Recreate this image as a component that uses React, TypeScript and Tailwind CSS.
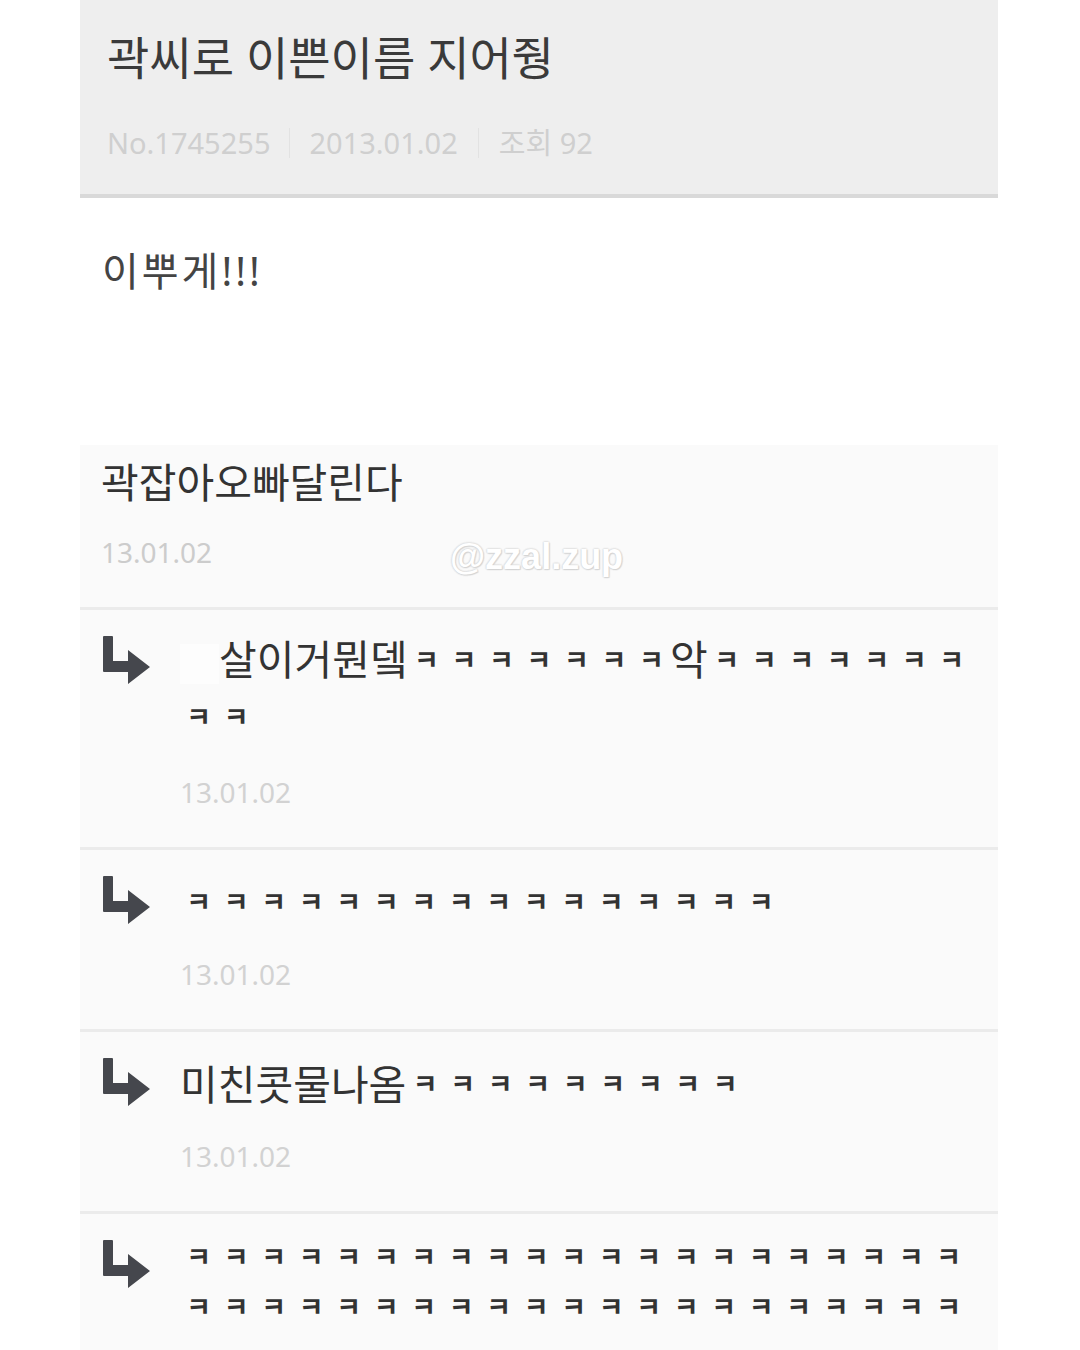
import React from "react";

const FONT = "font-['Noto_Sans','Noto_Sans_CJK_KR',sans-serif]";

function Arrow() {
  return (
    <svg width="50" height="50" viewBox="0 0 50 50" className="block">
      <path
        d="M3 1 Q3 0 4 0 H12 Q13 0 13 1 V25 H28 V14 L50 31 L28 48 V36 H4 Q3 36 3 35 Z"
        fill="#45474d"
      />
    </svg>
  );
}

function K() {
  return (
    <span className="inline-block w-[37.5px] text-center align-top text-[27px] font-bold leading-[inherit] text-[#333333]">
      ㅋ
    </span>
  );
}

function Ks({ n }: { n: number }) {
  return (
    <>
      {Array.from({ length: n }).map((_, i) => (
        <K key={i} />
      ))}
    </>
  );
}

function Reply({
  children,
  pt,
  leading,
  date = true,
}: {
  children: React.ReactNode;
  pt: string;
  leading: string;
  date?: boolean;
}) {
  return (
    <div className="flex items-start border-b-[3px] border-[#ebebeb] pl-[20px] pr-[18px]">
      <div className="mt-[26px] w-[50px] shrink-0">
        <Arrow />
      </div>
      <div className={`ml-[30px] flex-1 ${pt} ${date ? "pb-[40px]" : "pb-[20px]"}`}>
        <div className={`text-[41px] ${leading} text-[#333333]`}>{children}</div>
        {date && (
          <div className="mt-[32px] text-[28px] leading-[30px] text-[#d2d2d2]">13.01.02</div>
        )}
      </div>
    </div>
  );
}

export default function App() {
  return (
    <div className={`min-h-[1350px] w-[1080px] overflow-hidden bg-white ${FONT}`}>
      <div className="ml-[80px] w-[918px]">
        {/* header */}
        <div className="h-[198px] border-b-4 border-[#d9d9d9] bg-[#eeeeee] px-[27px] pt-[29px]">
          <div className="text-[46px] leading-[56px] text-[#3a3a3a]">곽씨로 이쁜이름 지어줭</div>
          <div className="mt-[41px] flex items-center text-[29px] leading-[34px] text-[#cfcfcf]">
            <span>No.1745255</span>
            <span className="mx-[19px] h-[30px] w-px bg-[#e2e2e2]" />
            <span>2013.01.02</span>
            <span className="mx-[20px] h-[30px] w-px bg-[#e2e2e2]" />
            <span>조회 92</span>
          </div>
        </div>

        {/* post body */}
        <div className="h-[247px] bg-white pl-[22px] pt-[48px]">
          <div className="text-[40px] leading-[50px] tracking-[3px] text-[#444444]">이뿌게!!!</div>
        </div>

        {/* comments */}
        <div className="bg-[#fafafa]">
          <div className="relative border-b-[3px] border-[#ebebeb] pl-[21px] pt-[12px] pb-[40px]">
            <div className="text-[41px] leading-[50px] text-[#333333]">곽잡아오빠달린다</div>
            <div className="mt-[30px] text-[28px] leading-[30px] text-[#cccccc]">13.01.02</div>
            <div className="absolute left-[370px] top-[90px] font-['Liberation_Sans',sans-serif] text-[36px] font-bold leading-[44px] text-white [text-shadow:0_0_2px_#cfcfcf,0_0_2px_#cfcfcf,1px_1px_1px_#d8d8d8]">
              @zzal.zup
            </div>
          </div>

          <Reply pt="pt-[21px]" leading="leading-[57px]">
            <span className="inline-block h-[40px] w-[39px] align-middle bg-[#fdfdfd]" />
            살이거뭔뎈
            <Ks n={7} />
            악
            <Ks n={7} />
            <Ks n={2} />
          </Reply>

          <Reply pt="pt-[27px]" leading="leading-[50px]">
            <Ks n={16} />
          </Reply>

          <Reply pt="pt-[27px]" leading="leading-[50px]">
            미친콧물나옴
            <Ks n={9} />
          </Reply>

          <Reply pt="pt-[18px]" leading="leading-[50px]" date={false}>
            <Ks n={42} />
          </Reply>
        </div>
      </div>
    </div>
  );
}
